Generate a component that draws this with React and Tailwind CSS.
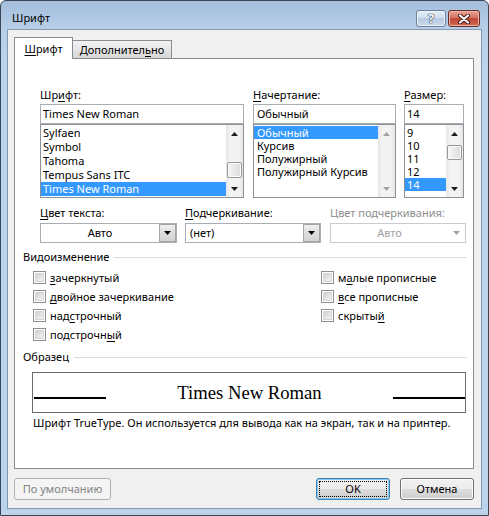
import React from "react";

const U = ({ children }) => (
  <span className="underline decoration-1 underline-offset-[2px]">{children}</span>
);

function Arrow({ dir = "down", color = "#000" }) {
  return (
    <svg width="7" height="4" viewBox="0 0 7 4">
      {dir === "up" ? (
        <path d="M3.5 0 L7 4 L0 4 Z" fill={color} />
      ) : (
        <path d="M0 0 L7 0 L3.5 4 Z" fill={color} />
      )}
    </svg>
  );
}

function ScrollBar({ thumbCls, disabled }) {
  const c = disabled ? "#a3a3a3" : "#1e1e1e";
  return (
    <div className="w-[17px] h-full flex flex-col bg-[linear-gradient(to_right,#e6e6e6,#f3f3f3_25%,#f3f3f3_75%,#e6e6e6)]">
      <div className="h-[17px] flex items-center justify-center">
        <Arrow dir="up" color={c} />
      </div>
      <div className="flex-1 flex flex-col items-center">
        {thumbCls && (
          <div
            className={
              "w-[15px] rounded-[2px] border border-[#979797] bg-[linear-gradient(to_right,#f6f6f6,#e9e9e9_50%,#dcdcdc)] shadow-[inset_0_0_0_1px_#fbfbfb] " +
              thumbCls
            }
          />
        )}
      </div>
      <div className="h-[17px] flex items-center justify-center">
        <Arrow dir="down" color={c} />
      </div>
    </div>
  );
}

function ListBox({ items, sel, rowCls, thumbCls, disabled, padCls = "pl-[2px]" }) {
  return (
    <div className="h-[74px] border border-[#8e9196] bg-white flex">
      <div className="flex-1 pt-[1px] overflow-hidden">
        {items.map((t, i) => (
          <div
            key={t}
            className={
              rowCls +
              " " +
              padCls +
              " whitespace-nowrap " +
              (i === sel ? "bg-[#3399ff] text-white" : "")
            }
          >
            {t}
          </div>
        ))}
      </div>
      <ScrollBar thumbCls={thumbCls} disabled={disabled} />
    </div>
  );
}

function Field({ children, padCls = "pl-[2px]" }) {
  return (
    <div className={"h-[20px] border border-[#a9adb4] bg-white leading-[18px] whitespace-nowrap " + padCls}>
      {children}
    </div>
  );
}

function Label({ children, cls = "" }) {
  return <div className={"h-[16px] leading-[16px] whitespace-nowrap " + cls}>{children}</div>;
}

function Combo({ text, center, disabled }) {
  return (
    <div
      className={
        "h-[20px] border bg-white flex " +
        (disabled ? "border-[#c9cbcd] text-[#a2a2a2]" : "border-[#a9adb4]")
      }
    >
      <div
        className={
          "flex-1 leading-[18px] whitespace-nowrap " + (center ? "text-center" : "pl-[4px]")
        }
      >
        {text}
      </div>
      {disabled ? (
        <div className="w-[17px] h-full flex items-center justify-center">
          <Arrow color="#a3a3a3" />
        </div>
      ) : (
        <div className="w-[17px] h-full border border-[#a4a4a4] bg-[linear-gradient(#f0f0f0,#dddddd_50%,#d2d2d2)] flex items-center justify-center">
          <Arrow />
        </div>
      )}
    </div>
  );
}

function Check({ children }) {
  return (
    <div className="h-[19px] flex items-center gap-[4px] whitespace-nowrap">
      <div className="w-[13px] h-[13px] border border-[#8e8f8f] bg-white p-[1px]">
        <div className="w-full h-full bg-[linear-gradient(135deg,#cfd1d4,#f4f4f4)] border border-[#d6d6d6]" />
      </div>
      <div className="leading-[16px]">{children}</div>
    </div>
  );
}

function GroupHeader({ children }) {
  return (
    <div className="h-[16px] flex items-center">
      <div className="leading-[16px] whitespace-nowrap">{children}</div>
      <div className="flex-1 h-px bg-[#d5dfe5] ml-[5px]" />
    </div>
  );
}

const btnBase =
  "h-[22px] rounded-[3px] border flex items-center justify-center whitespace-nowrap leading-[16px]";
const btnFace =
  "bg-[linear-gradient(#f2f2f2_0%,#ebebeb_50%,#dddddd_50%,#cfcfcf_100%)] shadow-[inset_0_0_0_1px_#fcfcfc]";

export default function App() {
  return (
    <div className="w-[489px] h-[516px] font-['Noto_Sans',sans-serif] text-[11px] text-black">
      <div className="w-full h-full flex flex-col border border-[#3a4656] rounded-t-[6px] bg-[linear-gradient(to_bottom,#a4bedb_0px,#b6cee8_26px,#bcd3ec_60px,#bcd3ec_100%)]">
        {/* Title bar */}
        <div className="h-[28px] flex items-start pl-[11px] pr-[8px]">
          <div className="pt-[9px] leading-[16px]">Шрифт</div>
          <div className="ml-auto mt-[9px] flex gap-[2px]">
            <div className="w-[30px] h-[17px] rounded-[3px] border border-[#6c809a] bg-[linear-gradient(#e6eef7,#cfdded_45%,#b7cce3_50%,#c7d9ec)] shadow-[inset_0_0_0_1px_#eef4fa] flex items-center justify-center">
              <span className="text-[12px] font-bold leading-none text-white [text-shadow:0_0_1px_#1f3048,0_0_1px_#1f3048,0_0_1px_#1f3048]">
                ?
              </span>
            </div>
            <div className="w-[32px] h-[17px] rounded-[3px] border border-[#6d2c25] bg-[linear-gradient(#e8a596,#d27565_45%,#c04733_50%,#cf6a54)] shadow-[inset_0_0_0_1px_#eab3a8] flex items-center justify-center">
              <svg width="12" height="10" viewBox="0 0 12 10">
                <path d="M2 1.5 L10 8.5 M10 1.5 L2 8.5" stroke="#3b1410" strokeWidth="4" strokeLinecap="round" />
                <path d="M2 1.5 L10 8.5 M10 1.5 L2 8.5" stroke="#ffffff" strokeWidth="2.2" strokeLinecap="round" />
              </svg>
            </div>
          </div>
        </div>

        {/* Client */}
        <div className="mx-[6px] mb-[6px] flex-1 border border-[#8499b2] bg-[#f0f0f0] flex flex-col pl-[6px] pr-[7px] pt-[7px] pb-[8px]">
          {/* Tabs */}
          <div className="h-[21px] flex items-start relative z-10">
            <div className="w-[59px] h-[22px] border-t border-l border-r border-[#898c95] bg-white flex justify-center pt-[3px] leading-[16px]">
              <span>
                <U>Ш</U>рифт
              </span>
            </div>
            <div className="w-[99px] h-[18px] mt-[3px] border-t border-r border-[#898c95] bg-[linear-gradient(#f3f3f3,#e6e6e6_50%,#d6d6d6)] flex justify-center pt-[1px] leading-[16px]">
              <span>
                Дополнител<U>ь</U>но
              </span>
            </div>
          </div>

          {/* Panel */}
          <div className="h-[411px] border border-[#898c95] bg-white pl-[8px] pr-[6px] pt-[28px]">
            {/* Row 1 */}
            <div className="ml-[17px] flex">
              <div className="w-[204px]">
                <Label cls="mb-[1px]">
                  Шр<U>и</U>фт:
                </Label>
                <Field>Times New Roman</Field>
                <ListBox
                  items={["Sylfaen", "Symbol", "Tahoma", "Tempus Sans ITC", "Times New Roman"]}
                  sel={4}
                  rowCls="h-[14px] leading-[14px]"
                  thumbCls="mt-[20px] h-[16px]"
                />
              </div>
              <div className="w-[143px] ml-[9px]">
                <Label cls="mb-[1px]">
                  <U>Н</U>ачертание:
                </Label>
                <Field padCls="pl-[3px]">Обычный</Field>
                <ListBox
                  items={["Обычный", "Курсив", "Полужирный", "Полужирный Курсив"]}
                  sel={0}
                  rowCls="h-[13px] leading-[13px]"
                  padCls="pl-[3px]"
                  disabled
                />
              </div>
              <div className="w-[60px] ml-[8px]">
                <Label cls="mb-[1px]">
                  <U>Р</U>азмер:
                </Label>
                <Field>14</Field>
                <ListBox
                  items={["9", "10", "11", "12", "14"]}
                  sel={4}
                  rowCls="h-[13px] leading-[13px]"
                  thumbCls="mt-[3px] h-[15px]"
                />
              </div>
            </div>

            {/* Row 2 */}
            <div className="ml-[17px] mt-[7px] flex">
              <div className="w-[137px]">
                <Label cls="mb-[2px]">
                  <U>Ц</U>вет текста:
                </Label>
                <Combo text="Авто" center />
              </div>
              <div className="w-[136px] ml-[8px]">
                <Label cls="mb-[2px]">
                  <U>П</U>одчеркивание:
                </Label>
                <Combo text="(нет)" />
              </div>
              <div className="w-[136px] ml-[9px]">
                <Label cls="mb-[2px] text-[#8d8d8d]">Цвет подчеркивания:</Label>
                <Combo text="Авто" center disabled />
              </div>
            </div>

            {/* Видоизменение */}
            <div className="mt-[6px]">
              <GroupHeader>Видоизменение</GroupHeader>
            </div>
            <div className="mt-[3px] ml-[10px] flex">
              <div className="w-[288px]">
                <Check>
                  <U>з</U>ачеркнутый
                </Check>
                <Check>
                  <U>д</U>войное зачеркивание
                </Check>
                <Check>
                  над<U>с</U>трочный
                </Check>
                <Check>
                  подстрочн<U>ы</U>й
                </Check>
              </div>
              <div>
                <Check>
                  м<U>а</U>лые прописные
                </Check>
                <Check>
                  <U>в</U>се прописные
                </Check>
                <Check>
                  скрыты<U>й</U>
                </Check>
              </div>
            </div>

            {/* Образец */}
            <div className="mt-[5px]">
              <GroupHeader>Образец</GroupHeader>
            </div>
            <div className="mt-[7px] ml-[9px] w-[434px] h-[41px] border border-[#6b6b6b] flex">
              <div className="w-[73px] pl-[1px] flex flex-col justify-end pb-[13px]">
                <div className="h-[2px] bg-black" />
              </div>
              <div className="flex-1 flex items-center justify-center font-['Liberation_Serif',serif] text-[18.67px] leading-[20px] whitespace-nowrap">
                Times New Roman
              </div>
              <div className="w-[72px] flex flex-col justify-end pb-[13px]">
                <div className="h-[2px] bg-black" />
              </div>
            </div>
            <div className="mt-[2px] ml-[10px] h-[16px] leading-[16px] whitespace-nowrap">
              Шрифт TrueType. Он используется для вывода как на экран, так и на принтер.
            </div>
          </div>

          {/* Buttons */}
          <div className="mt-[9px] h-[22px] flex">
            <div className={btnBase + " w-[97px] border-[#adb2b5] bg-[#f4f4f4] text-[#838383]"}>
              По умолчанию
            </div>
            <div
              className={
                btnBase +
                " ml-auto w-[74px] border-[#3c7fb1] p-[2px] bg-[linear-gradient(#f2f2f2_0%,#ebebeb_50%,#dddddd_50%,#cfcfcf_100%)] shadow-[inset_0_0_0_1px_#8cc9f0]"
              }
            >
              <div className="w-full h-full border border-dotted border-black flex items-center justify-center">
                OK
              </div>
            </div>
            <div className={btnBase + " " + btnFace + " ml-[10px] w-[74px] border-[#707070]"}>
              Отмена
            </div>
          </div>
        </div>
      </div>
    </div>
  );
}
